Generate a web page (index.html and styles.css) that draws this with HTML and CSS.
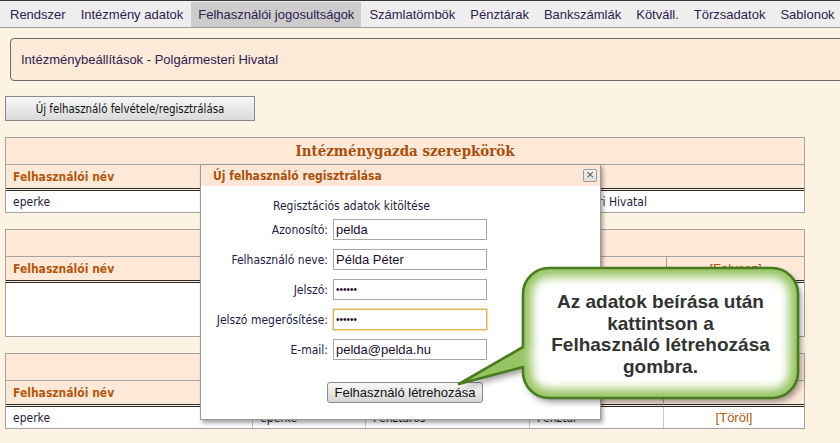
FILE: index.html
```html
<!DOCTYPE html>
<html lang="hu">
<head>
<meta charset="utf-8">
<title>Felhasználói jogosultságok</title>
<link rel="stylesheet" href="styles.css">
</head>
<body>
<nav class="menu">
  <a class="menu-item">Rendszer</a>
  <a class="menu-item">Intézmény adatok</a>
  <a class="menu-item is-active">Felhasználói jogosultságok</a>
  <a class="menu-item">Számlatömbök</a>
  <a class="menu-item">Pénztárak</a>
  <a class="menu-item">Bankszámlák</a>
  <a class="menu-item">Kötváll.</a>
  <a class="menu-item">Törzsadatok</a>
  <a class="menu-item">Sablonok</a>
</nav>

<main class="content">
  <div class="inst-box">Intézménybeállítások - Polgármesteri Hivatal</div>

  <button class="btn-new" type="button">Új felhasználó felvétele/regisztrálása</button>

  <table class="grid">
    <colgroup><col class="w-a1"><col></colgroup>
    <tr class="row-title"><td colspan="2">Intézménygazda szerepkörök</td></tr>
    <tr class="row-head"><th>Felhasználói név</th><th></th></tr>
    <tr class="row-data"><td>eperke</td><td>Polgármesteri Hivatal</td></tr>
  </table>

  <table class="grid">
    <colgroup><col class="w-1"><col class="w-2"><col class="w-3"><col class="w-4a"><col></colgroup>
    <tr class="row-title"><td colspan="5"></td></tr>
    <tr class="row-head"><th>Felhasználói név</th><th></th><th></th><th></th><th class="act"><span class="link">[Felvesz]</span></th></tr>
    <tr class="row-data row-empty"><td colspan="5"></td></tr>
  </table>

  <table class="grid">
    <colgroup><col class="w-1"><col class="w-2"><col class="w-3"><col class="w-4b"><col></colgroup>
    <tr class="row-title"><td colspan="5"></td></tr>
    <tr class="row-head"><th>Felhasználói név</th><th></th><th></th><th></th><th class="act"></th></tr>
    <tr class="row-data"><td>eperke</td><td>eperke</td><td>Pénztáros</td><td>Pénztár</td><td class="act"><span class="link">[Töröl]</span></td></tr>
  </table>
</main>

<div class="dialog">
  <div class="dlg-title">
    <span>Új felhasználó regisztrálása</span>
    <span class="dlg-close">&#215;</span>
  </div>
  <div class="dlg-body">
    <div class="dlg-intro">Regisztációs adatok kitöltése</div>
    <div class="dlg-form">
      <label class="dlg-label">Azonosító:</label>
      <input class="dlg-input" type="text" value="pelda">
      <label class="dlg-label">Felhasználó neve:</label>
      <input class="dlg-input" type="text" value="Példa Péter">
      <label class="dlg-label">Jelszó:</label>
      <input class="dlg-input" type="password" value="abcdef">
      <label class="dlg-label">Jelszó megerősítése:</label>
      <input class="dlg-input is-focus" type="password" value="abcdef">
      <label class="dlg-label">E-mail:</label>
      <input class="dlg-input" type="text" value="pelda@pelda.hu">
      <button class="btn-create" type="button">Felhasználó létrehozása</button>
    </div>
  </div>
</div>

<div class="callout">
  <svg class="callout-shape" width="365" height="150" viewBox="0 0 365 150">
    <defs>
      <filter id="shadow" x="-10%" y="-10%" width="130%" height="130%">
        <feDropShadow dx="3" dy="4" stdDeviation="3" flood-color="#000" flood-opacity="0.4"/>
      </filter>
      <filter id="glow" x="-10%" y="-10%" width="120%" height="120%">
        <feGaussianBlur stdDeviation="5"/>
      </filter>
      <clipPath id="clip">
        <path d="M104 6 H327 A26 26 0 0 1 353 32 V110 A26 26 0 0 1 327 136 H104 A26 26 0 0 1 78 110 V105 L14 122 L78 85 V32 A26 26 0 0 1 104 6 Z"/>
      </clipPath>
    </defs>
    <path filter="url(#shadow)" fill="#ffffff" d="M104 6 H327 A26 26 0 0 1 353 32 V110 A26 26 0 0 1 327 136 H104 A26 26 0 0 1 78 110 V105 L14 122 L78 85 V32 A26 26 0 0 1 104 6 Z"/>
    <g clip-path="url(#clip)">
      <path filter="url(#glow)" fill="none" stroke="#97c463" stroke-width="18" d="M104 6 H327 A26 26 0 0 1 353 32 V110 A26 26 0 0 1 327 136 H104 A26 26 0 0 1 78 110 V105 L14 122 L78 85 V32 A26 26 0 0 1 104 6 Z"/>
    </g>
    <path fill="none" stroke="#4a7b20" stroke-width="2.6" stroke-linejoin="round" d="M104 6 H327 A26 26 0 0 1 353 32 V110 A26 26 0 0 1 327 136 H104 A26 26 0 0 1 78 110 V105 L14 122 L78 85 V32 A26 26 0 0 1 104 6 Z"/>
  </svg>
  <div class="callout-text">Az adatok beírása után<br>kattintson a<br>Felhasználó létrehozása<br>gombra.</div>
</div>
</body>
</html>
```

FILE: styles.css
```css
html, body {
  margin: 0;
  padding: 0;
}
body {
  width: 840px;
  height: 443px;
  overflow: hidden;
  position: relative;
  background: #fdf3e2;
  font-family: "DejaVu Sans Condensed", "DejaVu Sans", sans-serif;
  font-size: 12px;
  color: #1e1e3c;
}

/* top menu */
.menu {
  display: flex;
  align-items: flex-end;
  height: 26px;
  padding-left: 3px;
  background: #eeeeee;
  border-top: 1px solid #3a3a3a;
  border-bottom: 1px solid #9a9a9a;
}
.menu-item {
  height: 25px;
  line-height: 25px;
  padding: 0 7px;
  margin-right: 1px;
  font-family: "Liberation Sans", Arial, sans-serif;
  font-size: 13px;
  color: #2f2150;
  white-space: nowrap;
}
.menu-item.is-active {
  background: #cccccc;
}

.content {
  width: 800px;
  padding: 10px 0 0 5px;
}

.inst-box {
  margin: 0 -60px 0 5px;
  height: 41px;
  line-height: 41px;
  padding-left: 10px;
  border: 1px solid #6a6a6a;
  border-radius: 4px;
  background: #fbead8;
  font-family: "Liberation Sans", Arial, sans-serif;
  font-size: 13px;
  color: #34204f;
}

.btn-new {
  display: block;
  margin-top: 15px;
  width: 250px;
  height: 25px;
  padding: 0;
  border: 1px solid #8a8a8a;
  border-radius: 0;
  background: linear-gradient(#f7f7f7, #dadada);
  font-family: "DejaVu Sans Condensed", "DejaVu Sans", sans-serif;
  font-size: 11.4px;
  color: #111;
}

/* tables */
.grid {
  width: 800px;
  margin-top: 16px;
  border: 1px solid #a3a3a3;
  border-spacing: 0;
  table-layout: fixed;
  background: #fff;
}
.w-a1 { width: 517px; }
.w-1 { width: 246px; }
.w-2 { width: 113px; }
.w-3 { width: 164px; }
.w-4a { width: 137px; }
.w-4b { width: 134px; }

.grid td, .grid th {
  box-sizing: border-box;
  padding: 0 7px;
  white-space: nowrap;
  overflow: hidden;
}
.row-title td {
  height: 26px;
  background: #fee8d8;
  text-align: center;
  font-family: "DejaVu Serif Condensed", "DejaVu Serif", serif;
  font-weight: bold;
  font-size: 14.9px;
  color: #a9500c;
}
.row-head th {
  height: 27px;
  background: #fee8d8;
  border-top: 1px solid #a3a3a3;
  border-bottom: 3px double #2c2c2c;
  text-align: left;
  font-weight: bold;
  font-size: 12px;
  color: #b3580e;
}
.row-head th + th {
  border-left: 1px solid #a3a3a3;
}
.row-head th.act,
.row-data td.act {
  text-align: center;
}
.row-data td {
  height: 21px;
  background: #fff;
  font-size: 12px;
  color: #1e1e3c;
}
.row-data td + td {
  border-left: 1px solid #c8c8c8;
}
.row-empty td {
  height: 53px;
}
.link {
  font-family: "Liberation Sans", Arial, sans-serif;
  font-weight: normal;
  font-size: 13px;
  color: #b5590f;
}

/* dialog */
.dialog {
  position: absolute;
  left: 200px;
  top: 164px;
  width: 399px;
  height: 254px;
  border: 1px solid #9a9a9a;
  background: #fff;
  box-shadow: 2px 3px 4px rgba(0, 0, 0, 0.35);
}
.dlg-title {
  display: flex;
  align-items: center;
  justify-content: space-between;
  height: 21px;
  padding: 0 3px 0 12px;
  background: #fde6d6;
  font-weight: bold;
  font-size: 12px;
  color: #ac510c;
}
.dlg-close {
  width: 12px;
  height: 11px;
  line-height: 10px;
  text-align: center;
  border: 1px solid #9b9b9b;
  border-radius: 2px;
  background: linear-gradient(#f6f6f6, #dedede);
  font-family: "DejaVu Sans", sans-serif;
  font-weight: normal;
  font-size: 11px;
  color: #555;
}
.dlg-body {
  padding: 12px 0 0 15px;
}
.dlg-intro {
  width: 271px;
  height: 16px;
  line-height: 16px;
  text-align: center;
  color: #1e1e3c;
}
.dlg-form {
  display: grid;
  grid-template-columns: 112px 154px;
  column-gap: 5px;
  row-gap: 9px;
  margin-top: 5px;
  align-items: center;
}
.dlg-label {
  text-align: right;
  white-space: nowrap;
  color: #25204a;
}
.dlg-input {
  box-sizing: border-box;
  width: 154px;
  height: 21px;
  margin: 0;
  padding: 0 2px;
  border: 1px solid #a8a8a8;
  border-radius: 0;
  background: #fff;
  font-family: "Liberation Sans", Arial, sans-serif;
  font-size: 13px;
  color: #1a1030;
  outline: none;
}
.dlg-input[type="password"] {
  font-size: 10px;
}
.dlg-input.is-focus {
  border-color: #e1b35e;
  box-shadow: 0 0 0 1px #f4deb0;
}
.btn-create {
  grid-column: 2;
  justify-self: start;
  margin: 13px 0 0 -6px;
  width: 156px;
  height: 21px;
  padding: 0;
  border: 1px solid #8c8c8c;
  border-radius: 3px;
  background: linear-gradient(#f8f8f8, #d6d6d6);
  font-family: "Liberation Sans", Arial, sans-serif;
  font-size: 13px;
  color: #111;
}

/* callout */
.callout {
  position: absolute;
  left: 445px;
  top: 262px;
  width: 365px;
  height: 150px;
}
.callout-shape {
  display: block;
}
.callout-text {
  position: absolute;
  left: 78px;
  top: 29px;
  width: 275px;
  text-align: center;
  font-family: "Liberation Sans", Arial, sans-serif;
  font-weight: bold;
  font-size: 19px;
  line-height: 21.5px;
  color: #333;
}
```
